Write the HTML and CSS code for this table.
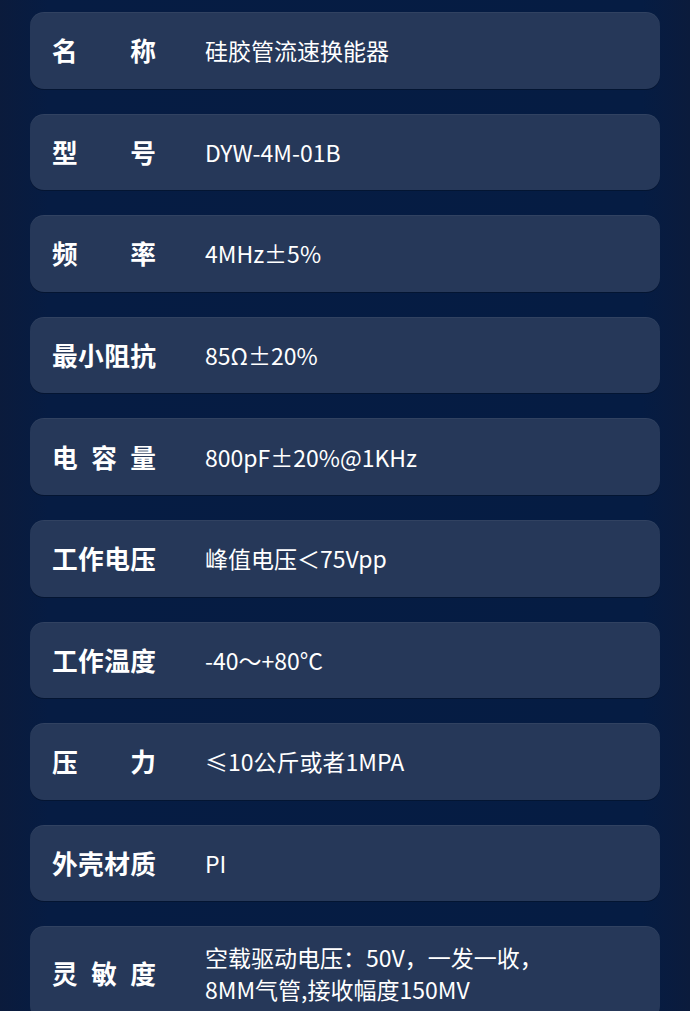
FILE: index.html
```html
<!DOCTYPE html>
<html lang="zh">
<head>
<meta charset="utf-8">
<link rel="stylesheet" href="styles.css">
</head>
<body>
<div class="list">
  <div class="card"><div class="label">名称</div><div class="value">硅胶管流速换能器</div></div>
  <div class="card"><div class="label">型号</div><div class="value">DYW-4M-01B</div></div>
  <div class="card"><div class="label">频率</div><div class="value">4MHz±5%</div></div>
  <div class="card"><div class="label">最小阻抗</div><div class="value">85Ω±20%</div></div>
  <div class="card"><div class="label">电容量</div><div class="value">800pF±20%@1KHz</div></div>
  <div class="card"><div class="label">工作电压</div><div class="value">峰值电压＜75Vpp</div></div>
  <div class="card"><div class="label">工作温度</div><div class="value">-40～+80°C</div></div>
  <div class="card"><div class="label">压力</div><div class="value">≤10公斤或者1MPA</div></div>
  <div class="card"><div class="label">外壳材质</div><div class="value">PI</div></div>
  <div class="card card-tall"><div class="label">灵敏度</div><div class="value value-multi"><div>空载驱动电压：50V，一发一收，</div><div>8MM气管,接收幅度150MV</div></div></div>
</div>
</body>
</html>
```
FILE: styles.css
```css
html, body {
  margin: 0;
  padding: 0;
}
body {
  background: linear-gradient(90deg, #0b1b3c 0%, #061c43 7%, #051c43 93%, #0b1b3c 100%);
  font-family: "Noto Sans CJK SC", "Noto Sans", sans-serif;
  color: #ffffff;
  height: 1011px;
  overflow: hidden;
}
.list {
  display: flex;
  flex-direction: column;
  gap: 25px;
  padding: 12px 30px 0 30px;
}
.card {
  min-height: 76.6px;
  box-sizing: border-box;
  background: #263859;
  border-radius: 14px;
  display: flex;
  align-items: center;
  padding: 0 22px;
  box-shadow: inset 0 1px 0 rgba(255,255,255,0.05), 0 1px 0 rgba(0,0,0,0.25);
}
.card-tall {
  padding-top: 15px;
  padding-bottom: 15px;
}
.label {
  width: 104px;
  flex: none;
  font-size: 25.7px;
  font-weight: 700;
  text-align: justify;
  text-align-last: justify;
  line-height: 32px;
}
.value {
  margin-left: 49px;
  font-size: 23px;
  line-height: 32px;
  font-weight: 400;
}
.value-multi {
  display: flex;
  flex-direction: column;
  gap: 0;
  line-height: 32px;
}
```
